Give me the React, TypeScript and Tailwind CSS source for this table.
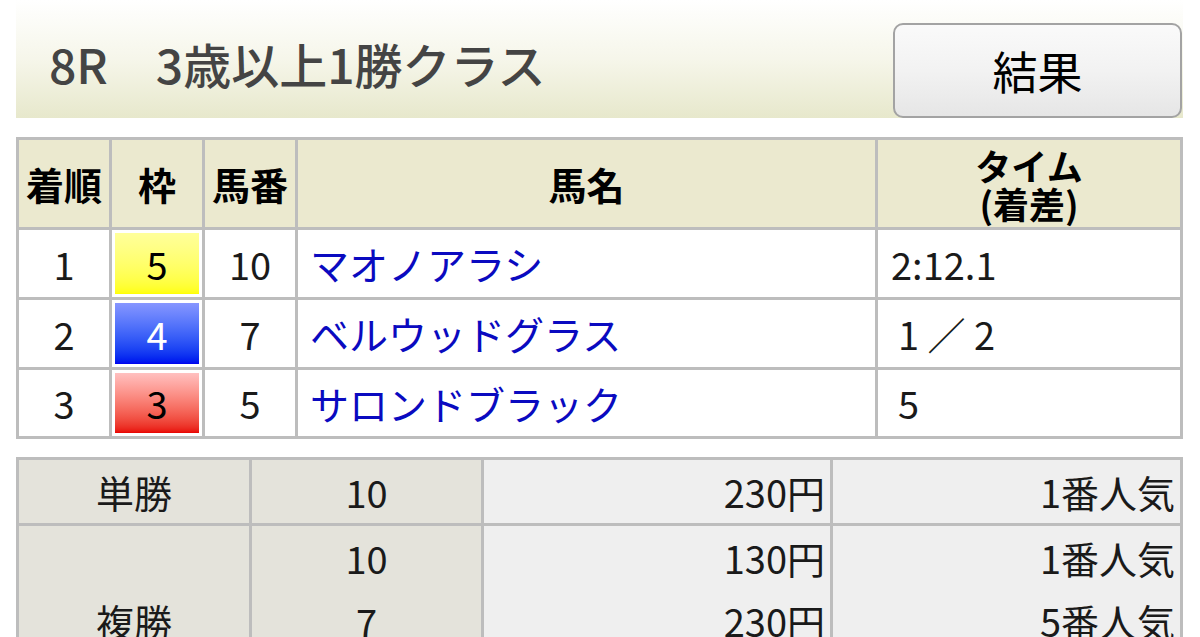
import { Fragment } from "react";

const rows = [
  { rank: "1", waku: "5", num: "10", name: "マオノアラシ", time: "2:12.1", pad: "pl-[13px]", box: "bg-gradient-to-b from-[#ffff9a] to-[#ffff00] text-black" },
  { rank: "2", waku: "4", num: "7", name: "ベルウッドグラス", time: "1 ／ 2", pad: "pl-[20px]", box: "bg-gradient-to-b from-[#8796ff] to-[#0000ee] text-white" },
  { rank: "3", waku: "3", num: "5", name: "サロンドブラック", time: "5", pad: "pl-[20px]", box: "bg-gradient-to-b from-[#ffc0c0] to-[#e80000] text-black" },
];

const payouts = [
  { label: "単勝", lines: [{ num: "10", yen: "230円", pop: "1番人気" }] },
  {
    label: "複勝",
    lines: [
      { num: "10", yen: "130円", pop: "1番人気" },
      { num: "7", yen: "230円", pop: "5番人気" },
      { num: "5", yen: "260円", pop: "6番人気" },
    ],
  },
];

export default function App() {
  return (
    <div className="w-[1200px] h-[637px] overflow-hidden bg-white font-['Noto_Sans_CJK_JP','Noto_Sans',sans-serif]">
      <div className="pl-[16px] pr-[17px]">
        {/* race header */}
        <div className="h-[118px] flex justify-between bg-gradient-to-b from-white via-[#f6f6ea] to-[#e7e8cc]">
          <h1 className="self-center mt-[8px] pl-[33px] text-[48px] font-medium leading-none text-[#444] whitespace-pre">
            8R　3歳以上1勝クラス
          </h1>
          <button className="self-end mr-[1px] w-[289px] h-[95px] rounded-[10px] border-2 border-[#a3a3a3] bg-gradient-to-b from-[#fafafa] via-[#f2f2f2] to-[#e6e6e6] text-[45px] leading-none text-black flex items-center justify-center">
            結果
          </button>
        </div>

        {/* result table */}
        <div className="mt-[19px] grid grid-cols-[90px_90px_90px_577px_1fr] grid-rows-[87px_67px_67px_66px] gap-[3px] p-[3px] bg-[#bdbdbd] text-[38px] leading-none text-[#1a1a1a]">
          <div className="bg-[#ebe9cf] flex items-center justify-center font-bold text-black">着順</div>
          <div className="bg-[#ebe9cf] flex items-center justify-center font-bold text-black">枠</div>
          <div className="bg-[#ebe9cf] flex items-center justify-center font-bold text-black">馬番</div>
          <div className="bg-[#ebe9cf] flex items-center justify-center font-bold text-black">馬名</div>
          <div className="bg-[#ebe9cf] flex flex-col items-center justify-center font-bold text-black text-[36px] leading-[38px]">
            <span>タイム</span>
            <span>(着差)</span>
          </div>
          {rows.map((r) => (
            <Fragment key={r.rank}>
              <div className="bg-white flex items-center justify-center">{r.rank}</div>
              <div className="bg-white p-[3px] flex">
                <div className={`flex-1 flex items-center justify-center ${r.box}`}>{r.waku}</div>
              </div>
              <div className="bg-white flex items-center justify-center">{r.num}</div>
              <div className="bg-white flex items-center pl-[12px] text-[39px] text-[#0a0ac0]">{r.name}</div>
              <div className={`bg-white flex items-center whitespace-pre ${r.pad}`}>{r.time}</div>
            </Fragment>
          ))}
        </div>

        {/* payout table */}
        <div className="mt-[18px] grid grid-cols-[230px_229px_346px_1fr] gap-[3px] p-[3px] bg-[#bdbdbd] text-[38px] leading-none text-[#1a1a1a]">
          {payouts.map((p) => (
            <Fragment key={p.label}>
              <div className="bg-[#e4e3db] flex items-center justify-center">{p.label}</div>
              <div className="bg-[#e4e3db] flex flex-col">
                {p.lines.map((l, i) => (
                  <div key={i} className="h-[63px] flex items-center justify-center">{l.num}</div>
                ))}
              </div>
              <div className="bg-[#efefef] flex flex-col">
                {p.lines.map((l, i) => (
                  <div key={i} className="h-[63px] flex items-center justify-end pr-[5px]">{l.yen}</div>
                ))}
              </div>
              <div className="bg-[#efefef] flex flex-col">
                {p.lines.map((l, i) => (
                  <div key={i} className="h-[63px] flex items-center justify-end pr-[5px]">{l.pop}</div>
                ))}
              </div>
            </Fragment>
          ))}
        </div>
      </div>
    </div>
  );
}
